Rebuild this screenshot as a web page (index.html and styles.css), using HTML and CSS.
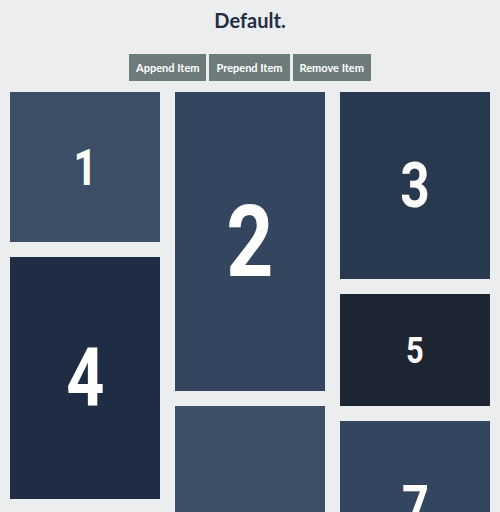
FILE: index.html
```html
<!DOCTYPE html>
<html>
<head>
<meta charset="utf-8">
<link rel="stylesheet" href="styles.css">
</head>
<body>
<h1 class="title">Default.</h1>
<div class="actions">
  <button class="btn">Append Item</button>
  <button class="btn">Prepend Item</button>
  <button class="btn">Remove Item</button>
</div>
<div class="masonry">
  <div class="col">
    <div class="item c1" style="--h:150px"><span class="num">1</span></div>
    <div class="item c4" style="--h:242px"><span class="num">4</span></div>
  </div>
  <div class="col">
    <div class="item c2" style="--h:299px"><span class="num">2</span></div>
    <div class="item c6" style="--h:300px"><span class="num">6</span></div>
  </div>
  <div class="col">
    <div class="item c3" style="--h:187px"><span class="num">3</span></div>
    <div class="item c5" style="--h:112px"><span class="num">5</span></div>
    <div class="item c7" style="--h:171px"><span class="num">7</span></div>
  </div>
</div>
</body>
</html>
```
FILE: styles.css
```css
html, body {
  margin: 0;
  padding: 0;
  background: #ecedef;
  overflow: hidden;
}
body {
  font-family: Lato, "Open Sans", sans-serif;
}
.title {
  margin: 0;
  font-size: 20px;
  font-weight: 700;
  line-height: 40px;
  text-align: center;
  color: #1f2d45;
}
.actions {
  display: flex;
  justify-content: center;
  gap: 3px;
  margin-top: 14px;
}
.btn {
  border: 0;
  margin: 0;
  height: 27px;
  padding: 0 7px;
  background: #6e7b7b;
  color: #fff;
  font-family: Lato, "Open Sans", sans-serif;
  font-weight: 700;
  font-size: 11px;
}
.masonry {
  display: flex;
  gap: 15px;
  padding: 0 10px;
  margin-top: 11px;
}
.col {
  flex: 1;
  display: flex;
  flex-direction: column;
  gap: 15px;
}
.item {
  height: var(--h);
  display: flex;
  align-items: center;
  justify-content: center;
  color: #fff;
  font-family: Roboto, "DejaVu Sans", sans-serif;
  font-weight: 700;
  font-size: calc(var(--h) * 0.335);
}
.num {
  display: inline-block;
  transform: scaleX(0.82);
}
.c1 { background: #3d4f66; }
.c2 { background: #34465f; }
.c3 { background: #28384f; }
.c4 { background: #1e2d43; }
.c5 { background: #1f2633; }
.c6 { background: #3d4f66; }
.c7 { background: #34465f; }
```
